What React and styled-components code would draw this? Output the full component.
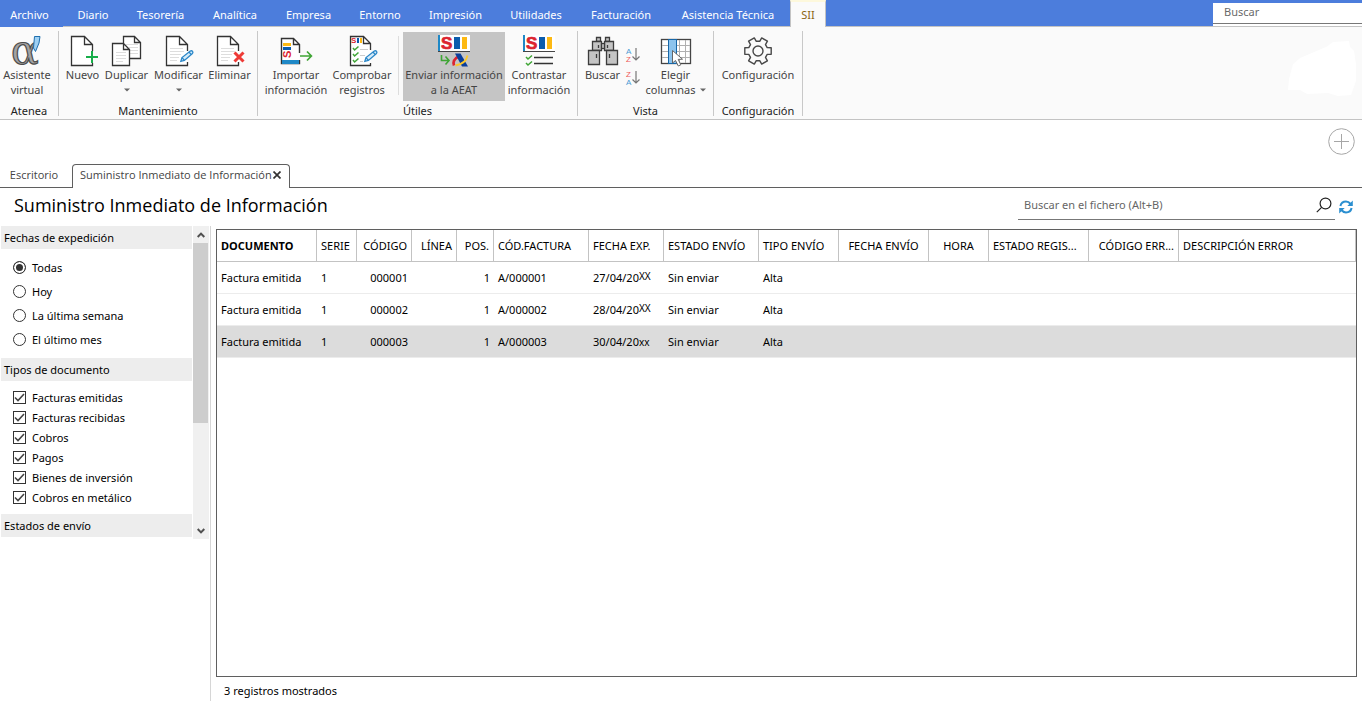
import React, { useState } from "react";
import styled, { createGlobalStyle, css } from "styled-components";

// Datos de la pantalla
const MENU = [
    { name: "Archivo", width: 63, isFile: true },
    { name: "Diario", width: 60 },
    { name: "Tesorería", width: 75 },
    { name: "Analítica", width: 74 },
    { name: "Empresa", width: 73 },
    { name: "Entorno", width: 70 },
    { name: "Impresión", width: 81 },
    { name: "Utilidades", width: 80 },
    { name: "Facturación", width: 90 },
    { name: "Asistencia Técnica", width: 124 },
    { name: "SII", width: 36, isActive: true }
];

const COLUMNS = [
    { name: "DOCUMENTO", width: 100, sorted: true },
    { name: "SERIE", width: 40 },
    { name: "CÓDIGO", width: 55, align: "right" },
    { name: "LÍNEA", width: 45, align: "right" },
    { name: "POS.", width: 37, align: "right" },
    { name: "CÓD.FACTURA", width: 95 },
    { name: "FECHA EXP.", width: 75 },
    { name: "ESTADO ENVÍO", width: 95 },
    { name: "TIPO ENVÍO", width: 80 },
    { name: "FECHA ENVÍO", width: 90, align: "center" },
    { name: "HORA", width: 60, align: "center" },
    { name: "ESTADO REGIS...", width: 100 },
    { name: "CÓDIGO ERR...", width: 90, align: "right" },
    { name: "DESCRIPCIÓN ERROR" }
];

const ROWS = [
    { code: "000001", invoice: "A/000001", date: "27/04/20", year: "XX" },
    { code: "000002", invoice: "A/000002", date: "28/04/20", year: "XX" },
    { code: "000003", invoice: "A/000003", date: "30/04/20", year: "xx", selected: true }
];

const DATES = ["Todas", "Hoy", "La última semana", "El último mes"];

const DOC_TYPES = [
    "Facturas emitidas",
    "Facturas recibidas",
    "Cobros",
    "Pagos",
    "Bienes de inversión",
    "Cobros en metálico"
];

export default function App() {
    return (
        <Page>
            <GlobalStyle />
            <MenuBar>
                {MENU.map(({ name, width, isFile, isActive }) => (
                    <MenuTab key={name} $width={width} $file={isFile} $active={isActive}>
                        {name}
                    </MenuTab>
                ))}
                <MenuSpace />
                <MenuSearch>
                    <MenuInput type="search" placeholder="Buscar" aria-label="Buscar" />
                </MenuSearch>
            </MenuBar>
            <Ribbon />
            <AddRow>
                <AddButton aria-label="Añadir">
                    <svg width="27" height="27" fill="none" stroke="#a6a6a6">
                        <circle cx="13.5" cy="13.5" r="12.8" />
                        <path d="M13.5 6V21M6 13.5H21" />
                    </svg>
                </AddButton>
            </AddRow>
            <Tabs>
                <PlainTab>Escritorio</PlainTab>
                <OpenTab>
                    Suministro Inmediato de Información
                    <CloseButton aria-label="Cerrar">
                        <svg width="8" height="8" stroke="#333" strokeWidth="1.7">
                            <path d="M0.5 0.5L7.5 7.5M7.5 0.5L0.5 7.5" />
                        </svg>
                    </CloseButton>
                </OpenTab>
                <TabsLine />
            </Tabs>
            <TitleRow>
                <Title>Suministro Inmediato de Información</Title>
                <FileSearch>
                    <FileInput
                        type="search"
                        placeholder="Buscar en el fichero (Alt+B)"
                        aria-label="Buscar en el fichero"
                    />
                    <svg width="16" height="16" fill="none" stroke="#222" strokeWidth="1.2">
                        <circle cx="9.5" cy="6.5" r="5.4" />
                        <path d="M5.6 10.4L0.8 15.2" />
                    </svg>
                </FileSearch>
                <IconButton aria-label="Actualizar">
                    <RefreshIcon />
                </IconButton>
            </TitleRow>
            <Body>
                <Filters />
                <Content>
                    <Records />
                    <Status>3 registros mostrados</Status>
                </Content>
            </Body>
        </Page>
    );
}

// Cinta de opciones
function Ribbon() {
    return (
        <RibbonBar>
            <Group name="Atenea" width={59} start>
                <Tool width={54} icon={<AlphaIcon />} lines={["Asistente", "virtual"]} />
            </Group>
            <Group name="Mantenimiento" width={199}>
                <Tool width={39} icon={<NewIcon />} lines={["Nuevo"]} />
                <Tool width={49} icon={<CopyIcon />} lines={["Duplicar"]} menu />
                <Tool width={55} icon={<EditIcon />} lines={["Modificar"]} menu />
                <Tool width={47} icon={<DeleteIcon />} lines={["Eliminar"]} />
            </Group>
            <Group name="Útiles" width={320}>
                <Tool width={68} icon={<ImportIcon />} lines={["Importar", "información"]} />
                <Tool width={64} icon={<CheckIcon />} lines={["Comprobar", "registros"]} />
                <ToolLine />
                <Tool width={102} icon={<SendIcon />} lines={["Enviar información", "a la AEAT"]} active />
                <Tool width={68} icon={<CompareIcon />} lines={["Contrastar", "información"]} />
            </Group>
            <Group name="Vista" width={136}>
                <Tool width={40} icon={<FindIcon />} lines={["Buscar"]} />
                <SortTools>
                    <IconButton aria-label="Orden ascendente">
                        <SortIcon top="A" bottom="Z" />
                    </IconButton>
                    <IconButton aria-label="Orden descendente">
                        <SortIcon top="Z" bottom="A" />
                    </IconButton>
                </SortTools>
                <Tool width={66} icon={<ColumnsIcon />} lines={["Elegir", "columnas"]} inlineMenu />
            </Group>
            <Group name="Configuración" width={89}>
                <Tool width={84} icon={<GearIcon />} lines={["Configuración"]} />
            </Group>
            <RibbonMark width="70" height="56" viewBox="0 0 70 56">
                <path
                    d="M0 49L1 38L5 23L12 17L38 6L45 1L61 0L62 6L66 10L68 23V40L63 54L50 55L40 52L19 53L12 49Z"
                    fill="#fff"
                />
            </RibbonMark>
        </RibbonBar>
    );
}

function Group({ name, width, start, children }) {
    return (
        <GroupBox $width={width}>
            <GroupTools $start={start}>{children}</GroupTools>
            <GroupName>{name}</GroupName>
        </GroupBox>
    );
}

function Tool({ width, icon, lines, menu, inlineMenu, active }) {
    return (
        <ToolButton $width={width} $active={active}>
            {icon}
            {lines.map((line, i) => (
                <ToolText key={line}>
                    {line}
                    {inlineMenu && i === lines.length - 1 && <Caret />}
                </ToolText>
            ))}
            {menu && (
                <ToolText>
                    <Caret />
                </ToolText>
            )}
        </ToolButton>
    );
}

function Caret() {
    return (
        <CaretIcon width="6" height="4">
            <path d="M0 0.5H6L3 3.5Z" fill="#666" />
        </CaretIcon>
    );
}

// Panel de filtros
function Filters() {
    const [date, setDate] = useState("Todas");
    const [types, setTypes] = useState(DOC_TYPES);

    const toggle = (name) =>
        setTypes(types.includes(name) ? types.filter((t) => t !== name) : [...types, name]);

    return (
        <Sidebar>
            <FilterList>
                <FilterTitle>Fechas de expedición</FilterTitle>
                <Options>
                    {DATES.map((name) => (
                        <Option key={name} $height={24}>
                            <Radio
                                type="radio"
                                name="date"
                                checked={date === name}
                                onChange={() => setDate(name)}
                            />
                            {name}
                        </Option>
                    ))}
                </Options>
                <FilterTitle>Tipos de documento</FilterTitle>
                <Options>
                    {DOC_TYPES.map((name) => (
                        <Option key={name} $height={20}>
                            <CheckCell>
                                <Checkbox
                                    type="checkbox"
                                    checked={types.includes(name)}
                                    onChange={() => toggle(name)}
                                />
                                {types.includes(name) && (
                                    <svg width="13" height="13" fill="none" stroke="#444" strokeWidth="1.6">
                                        <path d="M2 6.5L5 9.5L11 3" />
                                    </svg>
                                )}
                            </CheckCell>
                            {name}
                        </Option>
                    ))}
                </Options>
                <FilterTitle>Estados de envío</FilterTitle>
            </FilterList>
            <Scrollbar>
                <ScrollButton aria-label="Subir">
                    <svg width="8" height="6" fill="none" stroke="#505050" strokeWidth="2">
                        <path d="M0.7 5L4 1.6L7.3 5" />
                    </svg>
                </ScrollButton>
                <ScrollThumb />
                <ScrollTrack />
                <ScrollButton aria-label="Bajar">
                    <svg width="8" height="6" fill="none" stroke="#505050" strokeWidth="2">
                        <path d="M0.7 1L4 4.4L7.3 1" />
                    </svg>
                </ScrollButton>
            </Scrollbar>
        </Sidebar>
    );
}

// Tabla de registros
function Records() {
    return (
        <TableBox>
            <Table>
                <colgroup>
                    {COLUMNS.map(({ name, width }) => (
                        <Col key={name} $width={width} />
                    ))}
                </colgroup>
                <thead>
                    <tr>
                        {COLUMNS.map(({ name, align, sorted }) => (
                            <Th key={name} $align={align} $sorted={sorted}>
                                {name}
                            </Th>
                        ))}
                    </tr>
                </thead>
                <tbody>
                    {ROWS.map(({ code, invoice, date, year, selected }) => (
                        <Tr key={code} $selected={selected}>
                            <Td>Factura emitida</Td>
                            <Td>1</Td>
                            <Td $align="right">{code}</Td>
                            <Td />
                            <Td $align="right">1</Td>
                            <Td>{invoice}</Td>
                            <Td>
                                {date}
                                <Year $raised={!selected}>{year}</Year>
                            </Td>
                            <Td>Sin enviar</Td>
                            <Td>Alta</Td>
                            <Td />
                            <Td />
                            <Td />
                            <Td />
                            <Td />
                        </Tr>
                    ))}
                </tbody>
            </Table>
        </TableBox>
    );
}

// ======================================
// Iconos

function Icon({ children }) {
    return (
        <svg width="32" height="32" viewBox="0 0 32 32" fill="none" overflow="visible">
            {children}
        </svg>
    );
}

function Pencil({ x, y }) {
    return (
        <g transform={`translate(${x} ${y})`} stroke="#2b87c8" strokeWidth="1.3" fill="#d5ebf9">
            <path d="M0.8 11.4L2 7.6L10 1.2Q11.6 0.2 12.6 1.4Q13.4 2.6 12.2 3.8L4.4 10.4Z" />
            <path d="M2 7.6L4.4 10.4M9 2L11.3 4.6" />
        </g>
    );
}

function AlphaIcon() {
    return (
        <Icon>
            <text
                x="0"
                y="29"
                fontFamily="DejaVu Serif, serif"
                fontSize="41"
                fill="#a3a3a3"
                stroke="#4c4c4c"
                strokeWidth="1.2"
            >
                α
            </text>
            <path d="M23.5 1.5H29L28 8L24.5 16.5L22.5 13Z" fill="#9ed0f3" stroke="#1f6fae" />
        </Icon>
    );
}

function NewIcon() {
    return (
        <Icon>
            <path
                d="M25.5 16V9.5L17.5 1.5H4.5V30.5H25.5V28M17.5 1.5V9.5H25.5"
                fill="#fff"
                stroke="#333"
                strokeWidth="1.3"
            />
            <path d="M25 16V28M19 22H31" stroke="#17ad49" strokeWidth="2" />
        </Icon>
    );
}

function CopyIcon() {
    return (
        <Icon>
            <path d="M12.5 8V1.5H23.5L29.5 7.5V23.5H19M23.5 1.5V7.5H29.5" fill="#fff" stroke="#333" strokeWidth="1.3" />
            <path d="M15 9.5H27M18 12.5H27M19 15.5H27M19 18.5H27" stroke="#ddd" />
            <path d="M1.5 8.5H12.5L18.5 14.5V30.5H1.5ZM12.5 8.5V14.5H18.5" fill="#fff" stroke="#333" strokeWidth="1.3" />
            <path d="M5 17.5H15M5 20.5H15M5 23.5H15M5 26.5H12" stroke="#ddd" />
        </Icon>
    );
}

function TextPage() {
    return (
        <>
            <path
                d="M24.5 16V9.5L16.5 1.5H3.5V30.5H24.5V27M16.5 1.5V9.5H24.5"
                fill="#fff"
                stroke="#333"
                strokeWidth="1.3"
            />
            <path d="M7 13.5H20M7 16.5H21M7 19.5H18M7 22.5H16M7 25.5H14" stroke="#ddd" />
        </>
    );
}

function EditIcon() {
    return (
        <Icon>
            <TextPage />
            <Pencil x={17} y={15} />
        </Icon>
    );
}

function DeleteIcon() {
    return (
        <Icon>
            <TextPage />
            <path d="M20.5 17.5L29.5 26.5M29.5 17.5L20.5 26.5" stroke="#ee3a36" strokeWidth="3" />
        </Icon>
    );
}

function ImportIcon() {
    return (
        <Icon>
            <path d="M19.5 18V9.5L13.5 3.5H1.5V28.5H19.5V25M13.5 3.5V9.5H19.5" fill="#fff" stroke="#333" strokeWidth="1.4" />
            <rect x="2" y="25" width="17" height="4" fill="#1f88c6" />
            <rect x="3" y="8" width="8" height="3" fill="#fdb913" />
            <rect x="3" y="12" width="8" height="3" fill="#0b5cad" />
            <text
                transform="translate(11 23) rotate(-90)"
                fontFamily="Liberation Sans, sans-serif"
                fontWeight="bold"
                fontSize="11"
                fill="#dc2430"
            >
                S
            </text>
            <path d="M20 21H31M27 16.5L31.4 21L27 25.5" stroke="#3fa535" strokeWidth="1.7" />
        </Icon>
    );
}

function CheckIcon() {
    return (
        <Icon>
            <path d="M24.5 15V8.5L17.5 1.5H4.5V30.5H24.5V28M17.5 1.5V8.5H24.5" fill="#fff" stroke="#333" strokeWidth="1.3" />
            <text x="5" y="8" fontFamily="Liberation Sans, sans-serif" fontWeight="bold" fontSize="8" fill="#dc2430">
                S
            </text>
            <rect x="11" y="3" width="2" height="5" fill="#0b5cad" />
            <rect x="14" y="3" width="2" height="5" fill="#fdb913" />
            <path d="M7 13L8.6 15L12.5 11.5M7 19L8.6 21L12.5 17.5M7 25L8.6 27L12.5 23.5" stroke="#3fa535" strokeWidth="1.5" />
            <path d="M14 14.5H22M14 20.5H19M14 26.5H17" stroke="#ccc" />
            <Pencil x={18} y={15} />
        </Icon>
    );
}

function SiiLogo() {
    return (
        <>
            <rect width="32" height="16" fill="#fff" />
            <rect width="2" height="17" fill="#1f88c6" />
            <rect y="16" width="32" height="1" fill="#444" />
            <text
                x="3"
                y="14"
                fontFamily="Liberation Sans, sans-serif"
                fontWeight="bold"
                fontSize="17"
                fill="#dc2430"
                stroke="#dc2430"
                strokeWidth="0.7"
            >
                S
            </text>
            <rect x="16" y="2" width="6" height="12" fill="#0b5cad" />
            <rect x="24" y="2" width="5" height="12" fill="#fdb913" />
        </>
    );
}

function SendIcon() {
    return (
        <Icon>
            <SiiLogo />
            <path d="M3.5 20V25.5H10.5M7.5 21.5L11 25.5L7.5 29.5" stroke="#3fa535" strokeWidth="1.6" />
            <path d="M20.5 21.5Q14 25 16 30.5" stroke="#dc2430" strokeWidth="2.6" />
            <path d="M17 18.5H22.5L30 31.5H24Z" fill="#0a3f9c" />
            <path d="M17.5 30.5Q28 28.5 29.5 20.5" stroke="#fdc82a" strokeWidth="1.8" />
        </Icon>
    );
}

function CompareIcon() {
    return (
        <Icon>
            <SiiLogo />
            <path d="M3 22L5 24L9 20.5M3 28L5 30L9 26.5" stroke="#3fa535" strokeWidth="1.5" />
            <path d="M11 22.5H30M11 28.5H30" stroke="#333" strokeWidth="1.3" />
        </Icon>
    );
}

function FindIcon() {
    return (
        <Icon>
            <g fill="#c4c4c4" stroke="#3c3c3c" strokeWidth="1.3">
                <path d="M9.5 2.5H13.5V6.5H9.5ZM18.5 2.5H22.5V6.5H18.5Z" />
                <path d="M5.5 6.5H14.5V15.5H5.5ZM17.5 6.5H26.5V15.5H17.5Z" />
                <rect x="14.5" y="8.5" width="3" height="5" />
                <path d="M1.5 15.5H12.5V29.5H1.5ZM19.5 15.5H30.5V29.5H19.5Z" />
                <path d="M11.5 10V13M20.5 10V13M9.5 19V23M22.5 19V23" />
            </g>
        </Icon>
    );
}

function SortIcon({ top, bottom }) {
    const color = (letter) => (letter === "A" ? "#4a9bd4" : "#ee5a5a");

    return (
        <svg width="16" height="18" fill="none" fontFamily="Liberation Sans, sans-serif" fontSize="8">
            <text x="1" y="8" fill={color(top)}>{top}</text>
            <text x="1" y="16" fill={color(bottom)}>{bottom}</text>
            <path d="M11 2V14M7.5 10.5L11 14L14.5 10.5" stroke="#777" strokeWidth="1.2" />
        </svg>
    );
}

function ColumnsIcon() {
    return (
        <Icon>
            <rect x="1.5" y="4.5" width="29" height="24" fill="#fff" stroke="#444" strokeWidth="1.3" />
            <path d="M2 10.5H30M2 16.5H30M2 22.5H30M19.5 5V28M25.5 5V28" stroke="#b0b0b0" />
            <rect x="8.5" y="4.5" width="8" height="24" fill="#8cc4ee" stroke="#1767a8" />
            <path d="M12.5 15.5V28L15.5 25.5L18.3 31L20.8 29.8L18.2 24.4L22.5 24.2Z" fill="#fff" stroke="#666" />
        </Icon>
    );
}

// Seis dientes alrededor del centro
function GearIcon() {
    const points = [0, 60, 120, 180, 240, 300].flatMap((angle) =>
        [
            [-20, 9.8],
            [-14, 13.6],
            [14, 13.6],
            [20, 9.8]
        ].map(([turn, radius]) => {
            const rad = ((angle + turn) * Math.PI) / 180;
            return `${(16 + radius * Math.cos(rad)).toFixed(1)},${(16 + radius * Math.sin(rad)).toFixed(1)}`;
        })
    );

    return (
        <Icon>
            <polygon points={points.join(" ")} stroke="#484848" strokeWidth="1.4" strokeLinejoin="round" />
            <circle cx="16" cy="16" r="5" stroke="#484848" strokeWidth="1.4" />
        </Icon>
    );
}

function RefreshIcon() {
    return (
        <svg width="14" height="14" fill="none" stroke="#2b8fd0" strokeWidth="2">
            <path d="M1.4 6Q2.4 1.6 7 1.6Q9.6 1.6 11.6 4" />
            <path d="M12.6 8Q11.6 12.4 7 12.4Q4.4 12.4 2.4 10" />
            <path d="M13.8 0.5V6H8.3ZM0.2 13.5V8H5.7Z" fill="#2b8fd0" stroke="none" />
        </svg>
    );
}

// ======================================
// Estilos generales

const GlobalStyle = createGlobalStyle`
    * {
        box-sizing: border-box;
    }
    body {
        margin: 0;
        background: #fff;
        color: #000;
        font: 11px/15px "Noto Sans", "Open Sans", sans-serif;
    }
    button, input {
        margin: 0;
        padding: 0;
        border: 0;
        background: none;
        color: inherit;
        font: inherit;
    }
    svg {
        display: block;
        flex: none;
    }
`;

const Page = styled.div`
    display: flex;
    flex-direction: column;
    min-height: 100vh;
`;

// ======================================
// Menú superior

const MenuBar = styled.nav`
    display: flex;
    height: 27px;
    background: #4c7ddc;
`;

const MenuTab = styled.button`
    width: ${({ $width }) => $width}px;
    padding-top: 3px;
    border-bottom: 1px solid #c3c3c3;
    color: #fff;
    white-space: nowrap;

    ${({ $file }) => $file && css`
        border-bottom-color: #4c7ddc;
        padding-right: 4px;
    `}

    ${({ $active }) => $active && css`
        padding-top: 0;
        border: 1px solid #c3c3c3;
        border-width: 0 1px;
        border-top: 2px solid #fdf8dc;
        background: #fafafa;
        color: #8a6414;
    `}
`;

const MenuSpace = styled.div`
    flex: 1;
    border-bottom: 1px solid #c3c3c3;
`;

const MenuSearch = styled.div`
    width: 149px;
    margin-top: 3px;
    padding-bottom: 2px;
    border-bottom: 1px solid #c3c3c3;
    background: #fff;
`;

const MenuInput = styled.input`
    width: 100%;
    height: 21px;
    padding: 0 11px 3px;
    border-bottom: 1px solid #777;
    outline: none;

    &::placeholder {
        color: #6a6a6a;
    }
`;

// ======================================
// Cinta

const RibbonBar = styled.div`
    display: flex;
    height: 93px;
    border-bottom: 1px solid #c3c3c3;
    background: #fafafa;
`;

const GroupBox = styled.section`
    width: ${({ $width }) => $width}px;
    height: 85px;
    margin-top: 4px;
    padding-top: 1px;
    border-right: 1px solid #c8c8c8;
`;

const GroupTools = styled.div`
    display: flex;
    justify-content: ${({ $start }) => ($start ? "flex-start" : "center")};
    height: 69px;
`;

const GroupName = styled.div`
    padding-top: 2px;
    text-align: center;
    color: #222;
`;

const ToolButton = styled.button`
    display: flex;
    flex-direction: column;
    align-items: center;
    width: ${({ $width }) => $width}px;
    padding-top: 3px;
    background: ${({ $active }) => ($active ? "#c5c5c5" : "none")};
    color: #444;
    white-space: nowrap;
`;

const ToolText = styled.span`
    display: flex;
    align-items: center;
    gap: 4px;
    height: 15px;
`;

const CaretIcon = styled.svg`
    margin-top: 1px;
`;

const ToolLine = styled.div`
    width: 1px;
    height: 59px;
    margin: 4px 4px 0;
    background: #ddd;
`;

const SortTools = styled.div`
    display: flex;
    flex-direction: column;
    gap: 5px;
    padding: 14px 2px 0;
`;

const RibbonMark = styled.svg`
    margin: 14px 4px 0 auto;
`;

// ======================================
// Pestañas abiertas

const AddRow = styled.div`
    display: flex;
    justify-content: flex-end;
    height: 44px;
    padding: 8px 7px 0;
`;

const IconButton = styled.button`
    display: flex;
    align-items: center;
    justify-content: center;
`;

const AddButton = styled(IconButton)`
    width: 27px;
    height: 27px;
`;

const Tabs = styled.div`
    display: flex;
    height: 24px;
    color: #444;
    font-family: "Open Sans", sans-serif;
`;

const PlainTab = styled.button`
    width: 72px;
    padding: 0 4px 2px 0;
    border-bottom: 1px solid #5f5f5f;
`;

const OpenTab = styled.div`
    display: flex;
    align-items: center;
    justify-content: space-between;
    width: 218px;
    padding: 0 8px 4px 7px;
    border: 1px solid #5f5f5f;
    border-bottom: 0;
    border-radius: 4px 4px 0 0;
    white-space: nowrap;
`;

const CloseButton = styled(IconButton)`
    height: 15px;
`;

const TabsLine = styled.div`
    flex: 1;
    border-bottom: 1px solid #5f5f5f;
`;

// ======================================
// Título y búsqueda

const TitleRow = styled.header`
    display: flex;
    height: 38px;
    padding: 0 9px 0 14px;
`;

const Title = styled.h1`
    flex: 1;
    margin: 0;
    font-family: "Open Sans", sans-serif;
    font-size: 18px;
    font-weight: 400;
    line-height: 34px;
`;

const FileSearch = styled.div`
    display: flex;
    align-items: center;
    width: 317px;
    height: 32px;
    margin-right: 4px;
    padding: 2px 3px 0 6px;
    border-bottom: 1px solid #777;
`;

const FileInput = styled.input`
    flex: 1;
    height: 24px;
    outline: none;

    &::placeholder {
        color: #666;
    }
`;

// ======================================
// Filtros

const Body = styled.div`
    display: flex;
    flex: 1;
`;

const Sidebar = styled.aside`
    display: flex;
    align-items: flex-start;
    width: 211px;
    padding-left: 1px;
    border-right: 1px solid #d6d6d6;
`;

const FilterList = styled.div`
    flex: 1;
    margin-right: 1px;
`;

const FilterTitle = styled.h2`
    margin: 0;
    padding-left: 3px;
    background: #ededed;
    font-size: 11px;
    font-weight: 400;
    line-height: 23px;
`;

const Options = styled.div`
    padding: 6px 12px 7px;
`;

const Option = styled.label`
    display: flex;
    align-items: center;
    gap: 6px;
    height: ${({ $height }) => $height}px;
`;

const Radio = styled.input`
    appearance: none;
    width: 13px;
    height: 13px;
    border: 1px solid #333;
    border-radius: 50%;

    &:checked {
        background: #333;
        box-shadow: inset 0 0 0 2px #fff;
    }
`;

// La marca se dibuja encima de la casilla
const CheckCell = styled.span`
    display: grid;

    & > * {
        grid-area: 1 / 1;
        pointer-events: none;
    }
`;

const Checkbox = styled.input`
    appearance: none;
    width: 13px;
    height: 13px;
    border: 1px solid #333;
`;

const Scrollbar = styled.div`
    display: flex;
    flex-direction: column;
    width: 16px;
    height: 313px;
    margin-right: 1px;
    background: #f0f0f0;
`;

const ScrollButton = styled(IconButton)`
    height: 17px;
`;

const ScrollThumb = styled.div`
    width: 15px;
    height: 180px;
    background: #cdcdcd;
`;

const ScrollTrack = styled.div`
    flex: 1;
`;

// ======================================
// Tabla

const Content = styled.main`
    display: flex;
    flex: 1;
    flex-direction: column;
    min-width: 0;
    padding: 3px 5px 0;
`;

const TableBox = styled.div`
    flex: 1;
    border: 1px solid #5f5f5f;
    overflow: hidden;
`;

const Table = styled.table`
    width: 100%;
    table-layout: fixed;
    border-collapse: separate;
    border-spacing: 0;
`;

const Col = styled.col`
    width: ${({ $width }) => ($width ? `${$width}px` : "auto")};
`;

const Th = styled.th`
    height: 32px;
    padding: 0 4px;
    border-right: 1px solid #c3c3c3;
    border-bottom: 1px solid #c3c3c3;
    font-weight: ${({ $sorted }) => ($sorted ? 700 : 400)};
    text-align: ${({ $align }) => $align || "left"};
    white-space: nowrap;
`;

const Tr = styled.tr`
    background: ${({ $selected }) => ($selected ? "#dcdcdc" : "#fff")};
`;

const Td = styled.td`
    height: 32px;
    padding: 0 4px;
    border-bottom: 1px solid #ececec;
    text-align: ${({ $align }) => $align || "left"};
    white-space: nowrap;
`;

const Year = styled.span`
    font-size: 10px;
    line-height: 10px;
    vertical-align: ${({ $raised }) => ($raised ? "2px" : "baseline")};
`;

const Status = styled.footer`
    height: 24px;
    padding: 6px 8px 0;
`;
